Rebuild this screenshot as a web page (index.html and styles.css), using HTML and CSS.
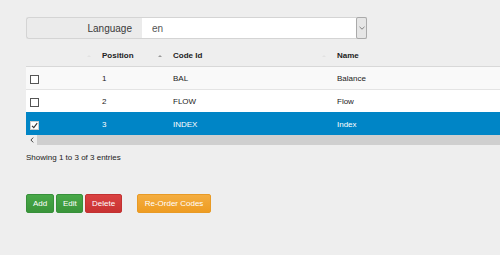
FILE: index.html
```html
<!DOCTYPE html>
<html lang="en">
<head>
  <meta charset="UTF-8" />
  <title>Codes</title>
  <link rel="stylesheet" href="styles.css">
</head>
<body>
  <main>
    <div class="input-group">
      <span class="addon">Language</span>
      <div class="select">
        <span class="select-value">en</span>
        <span class="select-arrow">
          <svg width="6" height="4" viewBox="0 0 6 4"><path d="M0.5 0.8 L3 3.2 L5.5 0.8" fill="none" stroke="#777" stroke-width="0.9"/></svg>
        </span>
      </div>
    </div>

    <div class="table-wrap">
      <table class="codes">
        <colgroup>
          <col class="c-check">
          <col class="c-pos">
          <col class="c-code">
          <col class="c-name">
        </colgroup>
        <thead>
          <tr>
            <th><span class="sort faint"></span></th>
            <th>Position<span class="sort active"></span></th>
            <th>Code Id<span class="sort faint"></span></th>
            <th>Name</th>
          </tr>
        </thead>
        <tbody>
          <tr class="odd">
            <td><span class="check"></span></td>
            <td>1</td>
            <td>BAL</td>
            <td>Balance</td>
          </tr>
          <tr class="even">
            <td><span class="check"></span></td>
            <td>2</td>
            <td>FLOW</td>
            <td>Flow</td>
          </tr>
          <tr class="selected">
            <td>
              <span class="check checked">
                <svg width="7" height="7" viewBox="0 0 7 7"><path d="M1 3.8 L2.8 5.6 L6.2 1.2" fill="none" stroke="#333" stroke-width="1.1"/></svg>
              </span>
            </td>
            <td>3</td>
            <td>INDEX</td>
            <td>Index</td>
          </tr>
        </tbody>
      </table>
      <div class="scrollbar">
        <span class="scroll-arrow">
          <svg width="4" height="6" viewBox="0 0 4 6"><path d="M3.2 0.6 L0.9 3 L3.2 5.4" fill="none" stroke="#444" stroke-width="1"/></svg>
        </span>
        <span class="scroll-track"></span>
      </div>
    </div>

    <div class="info">Showing 1 to 3 of 3 entries</div>

    <div class="actions">
      <button class="btn btn-success">Add</button>
      <button class="btn btn-success">Edit</button>
      <button class="btn btn-danger">Delete</button>
      <button class="btn btn-warning reorder">Re-Order Codes</button>
    </div>
  </main>
</body>
</html>
```

FILE: styles.css
```css
html,
body {
  margin: 0;
  padding: 0;
  overflow: hidden;
}
body {
  background: #eeeeee;
  font-family: "Liberation Sans", Arial, sans-serif;
  color: #333;
}
main {
  padding: 17px 0 0 26px;
  width: 520px;
}

/* Language selector */
.input-group {
  display: flex;
  width: 341px;
  height: 22px;
}
.addon {
  flex: none;
  width: 116px;
  padding-right: 10px;
  box-sizing: border-box;
  display: flex;
  align-items: center;
  justify-content: flex-end;
  font-size: 10px;
  color: #3a3a3a;
  background: #ebebeb;
  border: 1px solid #d4d4d4;
  border-right: none;
  border-radius: 3px 0 0 3px;
}
.select {
  flex: 1;
  display: flex;
  align-items: stretch;
  background: #fff;
  border: 1px solid #d4d4d4;
  border-left: none;
  border-right: none;
}
.select-value {
  flex: 1;
  display: flex;
  align-items: center;
  padding-left: 10px;
  font-size: 10px;
  color: #555;
}
.select-arrow {
  width: 9px;
  display: flex;
  align-items: center;
  justify-content: center;
  background: #e6e6e6;
  border: 1px solid #aaa;
  border-radius: 2px;
  margin: -1px 0;
}

/* Table */
.table-wrap {
  margin-top: 6px;
  width: 494px;
}
.codes {
  width: 100%;
  border-collapse: collapse;
  table-layout: fixed;
  font-size: 8px;
}
.c-check { width: 71px; }
.c-pos { width: 71px; }
.c-code { width: 164px; }
.codes th {
  position: relative;
  height: 21px;
  text-align: left;
  padding: 0 5px;
  font-weight: bold;
  color: #222;
  border-bottom: 1px solid #d8d8d8;
}
.codes td {
  height: 22px;
  padding: 0 5px;
  border-top: 1px solid #e4e4e4;
  vertical-align: middle;
  color: #222;
}
.codes td:first-child {
  padding-left: 4px;
}
.codes tr.odd td {
  background: #f9f9f9;
}
.codes tr.even td {
  background: #ffffff;
}
.codes tr.selected td {
  background: #0085c6;
  color: #fff;
  border-top-color: #0085c6;
}
.sort {
  position: absolute;
  right: 6px;
  top: 10px;
  width: 0;
  height: 0;
  border-left: 2px solid transparent;
  border-right: 2px solid transparent;
  border-bottom: 2px solid #999;
}
.sort.faint {
  border-bottom-color: #e2e2e2;
}
.check {
  display: inline-flex;
  align-items: center;
  justify-content: center;
  width: 7px;
  height: 7px;
  border: 1px solid #555;
  background: #fff;
  vertical-align: middle;
  margin-top: 2px;
}
.check.checked {
  border-color: #ccc;
}

/* Fake horizontal scrollbar */
.scrollbar {
  display: flex;
  height: 10px;
}
.scroll-arrow {
  width: 11px;
  display: flex;
  align-items: center;
  justify-content: center;
}
.scroll-track {
  flex: 1;
  background: #cfcfcf;
}

.info {
  margin-top: 7px;
  font-size: 8px;
  line-height: 12px;
  color: #222;
}

/* Buttons */
.actions {
  margin-top: 30px;
  display: flex;
  gap: 2px;
}
.btn {
  height: 19px;
  padding: 0 6px;
  font-family: "Liberation Sans", Arial, sans-serif;
  font-size: 8px;
  color: #fff;
  border: 1px solid transparent;
  border-radius: 2px;
  cursor: pointer;
}
.btn-success {
  background: linear-gradient(#48a848, #3a953a);
  border-color: #37903a;
  width: 28px;
}
.btn-success + .btn-success {
  width: 27px;
}
.btn-danger {
  background: linear-gradient(#da4242, #c83232);
  border-color: #c23131;
  width: 37px;
}
.btn-warning {
  background: linear-gradient(#f4ad40, #ee9c22);
  border-color: #e89a25;
}
.reorder {
  margin-left: 13px;
  width: 74px;
}
```
